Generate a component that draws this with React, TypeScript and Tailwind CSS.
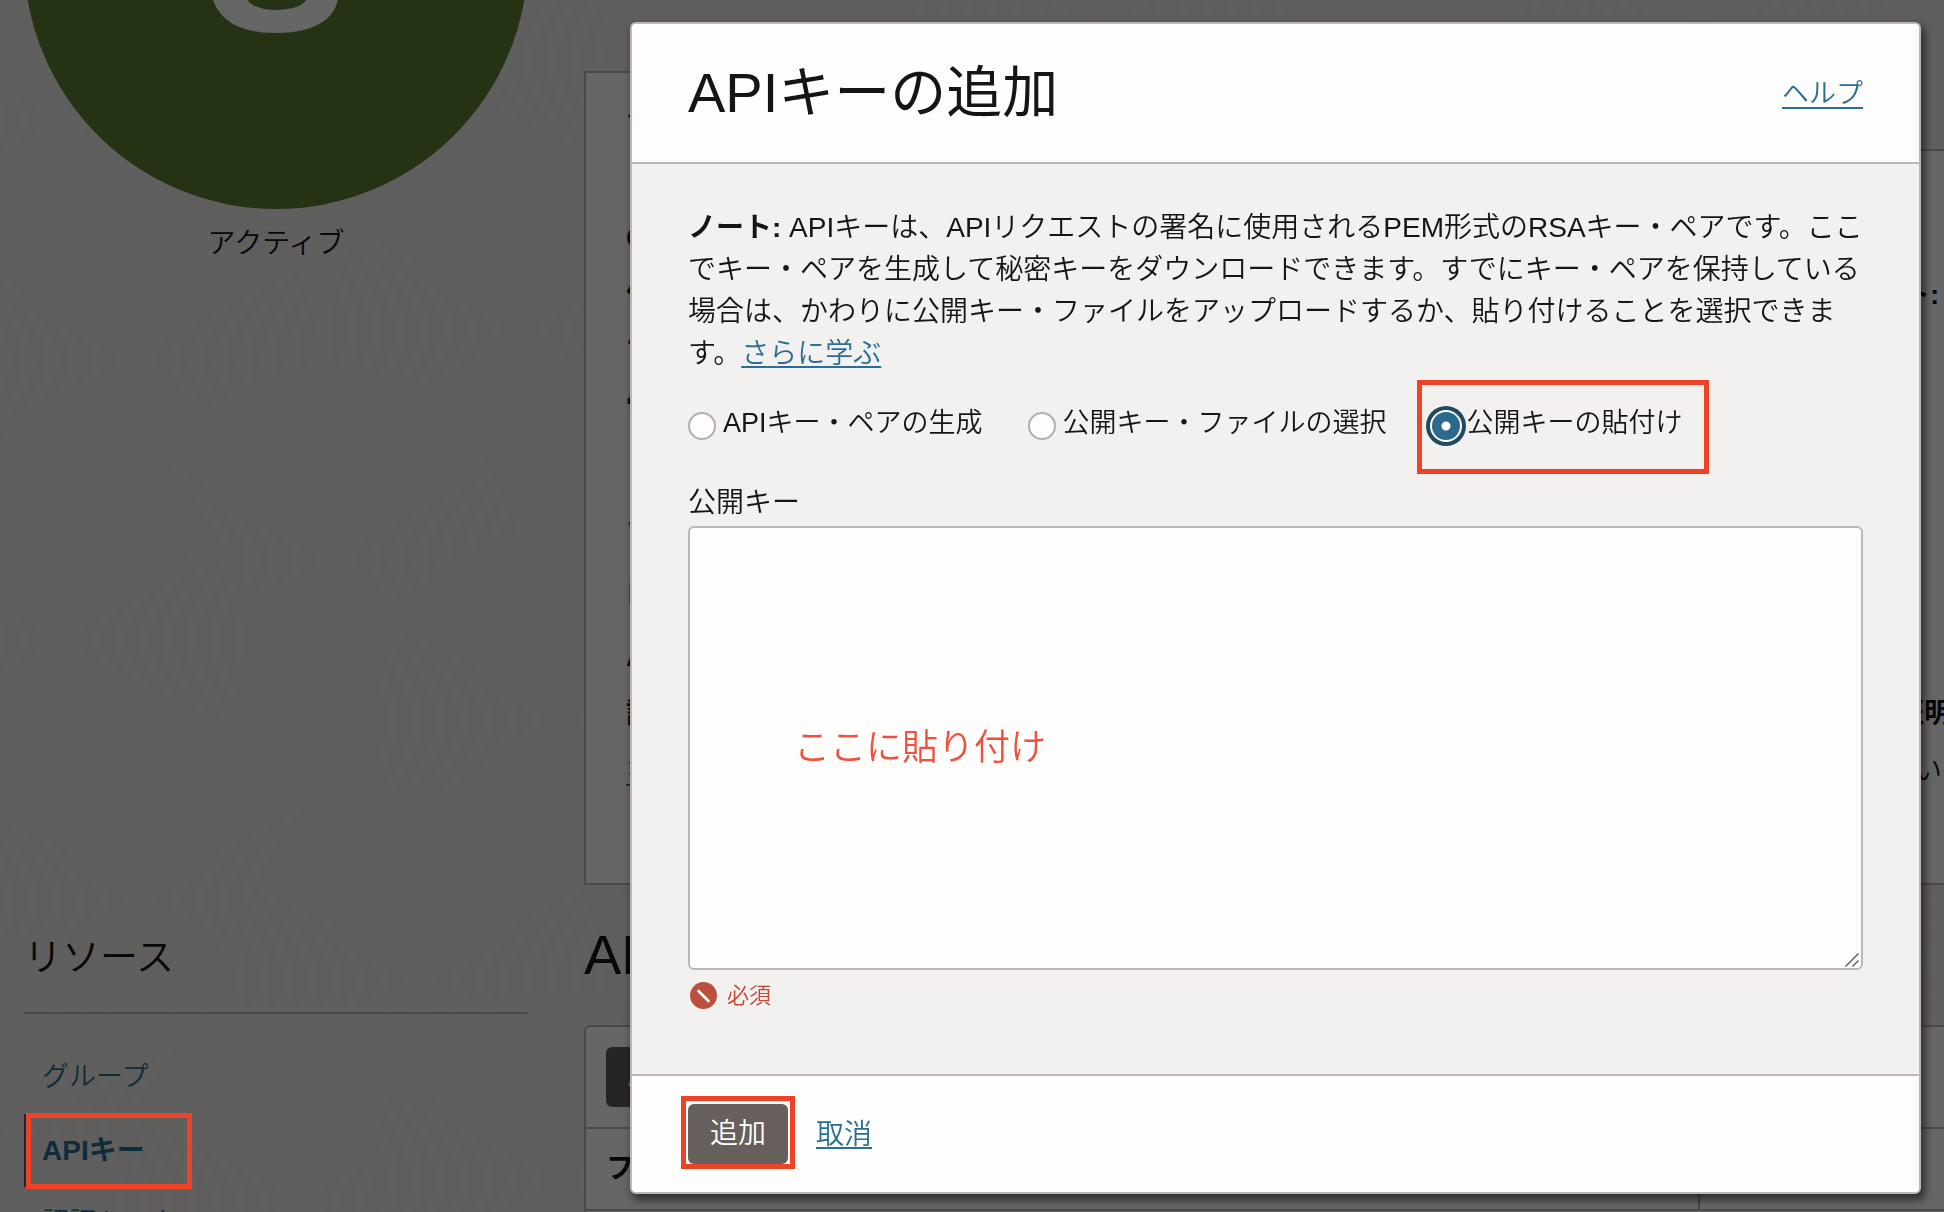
import type { ReactNode } from "react";

const FONT =
  "font-['Liberation_Sans','Noto_Sans_CJK_JP',sans-serif]";

const swirlCenters: [number, number][] = [
  [420, 60], [1700, 40], [1100, 20], [60, 120], [130, 360], [520, 330],
  [330, 560], [60, 640], [560, 720], [140, 900], [420, 980], [1930, 960],
  [20, 1130], [300, 1200], [560, 1180],
];
const swirlRadii = Array.from({ length: 15 }, (_, i) => 186 - i * 12);

function Swirls() {
  return (
    <svg className="absolute inset-0 h-full w-full" aria-hidden="true">
      {swirlCenters.map(([cx, cy]) =>
        swirlRadii.map((r, i) => (
          <circle
            key={`${cx}-${cy}-${r}`}
            cx={cx}
            cy={cy}
            r={r}
            fill={i === 0 ? "#efede9" : "none"}
            stroke="#ebebea"
            strokeWidth={5}
          />
        )),
      )}
    </svg>
  );
}

function Highlight({ className }: { className: string }) {
  return (
    <span
      aria-hidden="true"
      className={`pointer-events-none absolute border-[5px] border-[#ee4126] ${className}`}
    />
  );
}

function Sidebar() {
  return (
    <aside className="relative w-[504px] shrink-0">
      <div className="-mt-[295px] flex aspect-square w-full items-center justify-center rounded-full bg-[#5d7d32] text-[214px] leading-none font-bold text-white">
        S
      </div>
      <p className="flex h-[66px] items-center justify-center pt-1 text-[28px]">アクティブ</p>
      <h2 className="mt-[627px] flex h-[112px] items-center border-b-2 border-[#bbb6b1] text-[38px]">
        リソース
      </h2>
      <nav className="mt-[27px] text-[27px] text-[#2a6f93]">
        <a href="#groups" className="flex h-[73px] items-center pl-[18px]">グループ</a>
        <a
          href="#api-keys"
          className="relative flex h-[73px] items-center border-l-2 border-[#2a6f93] pl-4 text-[28px] font-bold"
        >
          APIキー
          <Highlight className="-top-px left-0 z-20 h-[76px] w-[166px]" />
        </a>
        <a href="#tokens" className="flex h-[73px] items-center pl-[18px]">認証トークン</a>
      </nav>
    </aside>
  );
}

function InfoRow({ children, right }: { children: ReactNode; right?: ReactNode }) {
  return (
    <div className="flex h-[57px] items-center">
      <div className="w-[1260px] shrink-0">{children}</div>
      <div className="shrink-0 whitespace-nowrap">{right}</div>
    </div>
  );
}

function UserPage() {
  return (
    <main className="relative min-w-0 flex-1 pt-[71px]">
      <div className="relative -mb-0.5 flex h-20 w-[300px] items-center border-t-2 border-l-2 border-[#bbb6b1] bg-white pb-1 pl-10 text-[28px]">
        ユーザー情報
      </div>
      <section className="border-2 border-r-0 border-[#bbb6b1] bg-white pt-[58px] pb-[84px] pl-10 text-[28px] font-bold">
        <InfoRow>OCID:</InfoRow>
        <InfoRow right={<span className="pl-4">ト:</span>}>作成:</InfoRow>
        <InfoRow>マルチファクタ認証:</InfoRow>
        <InfoRow>電子メール:</InfoRow>
        <div className="mt-[50px]">
          <InfoRow>ステータス</InfoRow>
        </div>
        <div className="mt-5">
          <InfoRow>
            <span className="ml-[3px] block size-[22px] border border-[#bbb6b1]" />
          </InfoRow>
        </div>
        <div className="mt-[7px]">
          <InfoRow>APIキー:</InfoRow>
          <InfoRow right={<span className="pl-2.5">証明書:</span>}>認証トークン:</InfoRow>
          <InfoRow right={<span className="font-[350]">はい</span>}>
            <a href="#none" className="font-[350] text-[#2a6f93] underline decoration-2 underline-offset-4">
              なし
            </a>
          </InfoRow>
        </div>
      </section>
      <h1 className="flex h-[140px] items-center text-[56px]">APIキー</h1>
      <section className="overflow-hidden rounded-tl-md border-2 border-r-0 border-[#bbb6b1] bg-white">
        <div className="flex border-b-2 border-[#bbb6b1] p-5">
          <button className="h-[60px] rounded-md bg-[#625d58] px-[22px] text-[28px] text-white">
            APIキーの追加
          </button>
        </div>
        <table className="w-full table-fixed border-collapse text-left text-[28px]">
          <thead>
            <tr className="h-[81px] border-b-2 border-[#bbb6b1]">
              <th className="w-[1113px] border-r-2 border-[#bbb6b1] pl-5">フィンガープリント</th>
              <th className="pl-5">作成</th>
            </tr>
          </thead>
          <tbody>
            <tr className="h-20">
              <td />
              <td />
            </tr>
          </tbody>
        </table>
      </section>
    </main>
  );
}

function KeyOption({ label, checked = false }: { label: string; checked?: boolean }) {
  return (
    <label className="relative flex items-center gap-[7px] text-[27px]">
      <input
        type="radio"
        name="key-source"
        defaultChecked={checked}
        className="size-7 shrink-0 appearance-none rounded-full border-2 border-[#b5afaa] bg-[#fdfdfc] checked:border-0 checked:bg-[radial-gradient(circle,#ffffff_4px,#2b6a8c_5px)] checked:shadow-[0_0_0_2px_#fbfbfa,0_0_0_6px_#1f4a60]"
      />
      <span className="pb-1.5 leading-[34px]">{label}</span>
      {checked && <Highlight className="-top-[26px] -left-[15px] h-[94px] w-[292px]" />}
    </label>
  );
}

function AddKeyDialog() {
  return (
    <div
      role="dialog"
      aria-modal="true"
      aria-labelledby="dialog-title"
      className="rounded-md border-2 border-[#bdb6b1] bg-[#f3f1f0] text-[28px] shadow-[3px_5px_9px_1px_rgba(0,0,0,0.55)]"
    >
      <header className="flex h-[140px] items-center justify-between rounded-t border-b-2 border-[#bdb6b1] bg-[#fdfdfc] px-14">
        <h2 id="dialog-title" className="text-[56px] leading-none font-normal">APIキーの追加</h2>
        <a href="#help" className="pt-0.5 text-[27px] text-[#2a6f93] underline decoration-2 underline-offset-4">ヘルプ</a>
      </header>

      <form onSubmit={(e) => e.preventDefault()}>
        <div className="px-14 pt-[43px] pb-[65px]">
          <p className="-mr-2 leading-[42px]">
            <strong>ノート:</strong>{" "}
            APIキーは、APIリクエストの署名に使用されるPEM形式のRSAキー・ペアです。ここでキー・ペアを生成して秘密キーをダウンロードできます。すでにキー・ペアを保持している場合は、かわりに公開キー・ファイルをアップロードするか、貼り付けることを選択できます。
            <a href="#learn" className="text-[#2a6f93] underline decoration-2 underline-offset-3">さらに学ぶ</a>
          </p>

          <div className="mt-[31px] flex gap-[45px]">
            <KeyOption label="APIキー・ペアの生成" />
            <KeyOption label="公開キー・ファイルの選択" />
            <KeyOption label="公開キーの貼付け" checked />
          </div>

          <label htmlFor="public-key" className="mt-9 block leading-[42px]">公開キー</label>
          <div className="relative mt-0.5">
            <textarea
              id="public-key"
              className="block h-[444px] w-full resize-none rounded-md border-2 border-[#bdb6b1] bg-[#fdfdfc] p-3"
            />
            <svg
              viewBox="0 0 14 14"
              className="pointer-events-none absolute right-1 bottom-[3px] size-3.5"
              aria-hidden="true"
            >
              <path d="M0.5 13.5 L13.5 0.5 M7.5 13.5 L13.5 7.5" stroke="#5c5b5a" strokeWidth="1.4" />
            </svg>
            <span className="pointer-events-none absolute top-[196px] left-[106px] text-[36px] leading-[52px] text-[#f0503f]">
              ここに貼り付け
            </span>
          </div>
          <p className="mt-3 flex h-[27px] items-center gap-2.5 pl-0.5 text-[22px] leading-none text-[#c74634]">
            <svg viewBox="0 0 27 27" className="size-[27px]" aria-hidden="true">
              <circle cx="13.5" cy="13.5" r="13.5" fill="#bb503d" />
              <path d="M8.5 9 L18.5 19" stroke="#fff" strokeWidth="2.6" strokeLinecap="round" />
            </svg>
            必須
          </p>
        </div>

        <footer className="flex h-[118px] items-center gap-7 rounded-b border-t-2 border-[#bdb6b1] bg-[#fdfdfc] px-14">
          <div className="relative">
            <button type="submit" className="h-[60px] rounded-md bg-[#665f5b] px-[22px] text-white">追加</button>
            <Highlight className="-top-2 -left-[7px] h-[73px] w-[114px]" />
          </div>
          <a href="#cancel" className="pt-0.5 text-[#2a6f93] underline decoration-2 underline-offset-3">取消</a>
        </footer>
      </form>
    </div>
  );
}

export default function App() {
  return (
    <div className={`relative h-screen overflow-hidden bg-[#efede9] font-[350] text-[#161513] ${FONT}`}>
      <Swirls />
      <div className="flex gap-14 pl-6">
        <Sidebar />
        <UserPage />
      </div>
      <div className="fixed inset-0 z-10 bg-black/60" />
      <div className="pointer-events-none fixed inset-0 z-30 pt-[22px] pr-[23px] pl-[630px]">
        <div className="pointer-events-auto">
          <AddKeyDialog />
        </div>
      </div>
    </div>
  );
}
